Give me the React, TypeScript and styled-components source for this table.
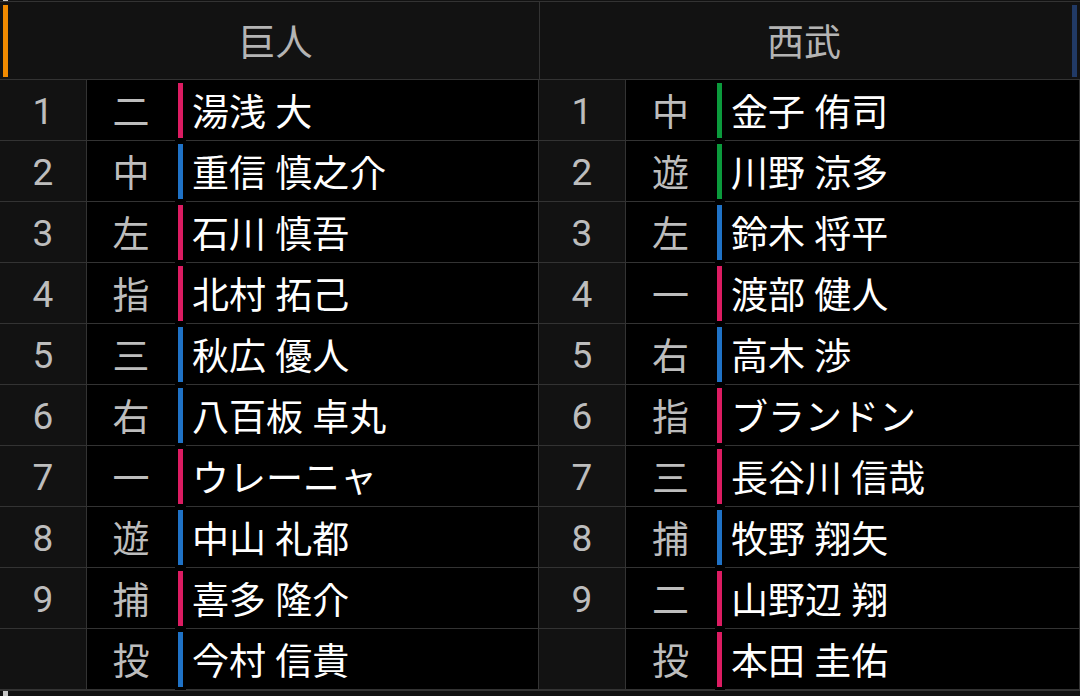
import React from "react";
import styled, { createGlobalStyle } from "styled-components";

const GlobalStyle = createGlobalStyle`
  html, body { margin: 0; padding: 0; background: #000; }
  body { font-family: Roboto, "Noto Sans CJK JP", sans-serif; }
`;

const COLORS = {
  pink: "#dc1c62",
  blue: "#1f72c6",
  green: "#0b9a3c",
};

type Bar = keyof typeof COLORS;
type Player = { num: string; pos: string; name: string; bar: Bar };

const giants: Player[] = [
  { num: "1", pos: "二", name: "湯浅 大", bar: "pink" },
  { num: "2", pos: "中", name: "重信 慎之介", bar: "blue" },
  { num: "3", pos: "左", name: "石川 慎吾", bar: "pink" },
  { num: "4", pos: "指", name: "北村 拓己", bar: "pink" },
  { num: "5", pos: "三", name: "秋広 優人", bar: "blue" },
  { num: "6", pos: "右", name: "八百板 卓丸", bar: "blue" },
  { num: "7", pos: "一", name: "ウレーニャ", bar: "pink" },
  { num: "8", pos: "遊", name: "中山 礼都", bar: "blue" },
  { num: "9", pos: "捕", name: "喜多 隆介", bar: "pink" },
  { num: "", pos: "投", name: "今村 信貴", bar: "blue" },
];

const lions: Player[] = [
  { num: "1", pos: "中", name: "金子 侑司", bar: "green" },
  { num: "2", pos: "遊", name: "川野 涼多", bar: "green" },
  { num: "3", pos: "左", name: "鈴木 将平", bar: "blue" },
  { num: "4", pos: "一", name: "渡部 健人", bar: "pink" },
  { num: "5", pos: "右", name: "高木 渉", bar: "blue" },
  { num: "6", pos: "指", name: "ブランドン", bar: "pink" },
  { num: "7", pos: "三", name: "長谷川 信哉", bar: "pink" },
  { num: "8", pos: "捕", name: "牧野 翔矢", bar: "blue" },
  { num: "9", pos: "二", name: "山野辺 翔", bar: "pink" },
  { num: "", pos: "投", name: "本田 圭佑", bar: "pink" },
];

const Page = styled.div`
  width: 1080px;
  height: 696px;
  overflow: hidden;
  background: #000;
`;

const Strip = styled.div`
  height: 1px;
  background: #121212;
  display: flex;
`;

const StripMark = styled.div`
  width: 5px;
  margin-left: 3px;
  background: #c8c8c8;
`;

const Header = styled.div`
  display: grid;
  grid-template-columns: 539px 1fr;
  height: 77px;
  background: #121212;
  border-top: 1px solid #333;
  border-bottom: 1px solid #333;
`;

const HeaderCell = styled.div<{ $divider?: boolean }>`
  display: flex;
  align-items: stretch;
  border-left: ${(p) => (p.$divider ? "1px solid #333" : "none")};
`;

const TeamBar = styled.div<{ $color: string; $side: "left" | "right" }>`
  width: 5px;
  margin: 3px 0 2px;
  ${(p) => (p.$side === "left" ? "margin-left: 3px;" : "margin-right: 3px;")}
  background: ${(p) => p.$color};
`;

const TeamName = styled.div<{ $side: "left" | "right" }>`
  flex: 1;
  display: flex;
  align-items: center;
  justify-content: center;
  font-size: 37px;
  color: #b4b4b4;
  padding-bottom: 1px;
  ${(p) => (p.$side === "left" ? "padding-left: 4px;" : "padding-right: 4px;")}
`;

const Body = styled.div`
  display: grid;
  grid-template-columns: 538px 542px;
`;

const Table = styled.div<{ $right?: boolean }>`
  display: flex;
  flex-direction: column;
  ${(p) => (p.$right ? "border-left: 1px solid #333; border-right: 1px solid #333;" : "")}
`;

const Row = styled.div<{ $right?: boolean }>`
  display: grid;
  grid-template-columns: ${(p) => (p.$right ? "87px 89px 10px 1fr" : "87px 88px 11px 1fr")};
  height: 61px;
`;

const Num = styled.div`
  background: #121212;
  border-right: 1px solid #333;
  border-bottom: 1px solid #333;
  display: flex;
  align-items: center;
  justify-content: center;
  color: #bdbdbd;
  font-size: 37px;
  padding-top: 3px;
`;

const Pos = styled.div`
  border-bottom: 1px solid #333;
  display: flex;
  align-items: center;
  justify-content: center;
  color: #bdbdbd;
  font-size: 37px;
`;

const BarCell = styled.div<{ $right?: boolean }>`
  padding-top: 3px;
  padding-left: ${(p) => (p.$right ? "2px" : "3px")};
`;

const PlayerBar = styled.div<{ $color: string }>`
  width: 5px;
  height: 55px;
  background: ${(p) => p.$color};
`;

const Name = styled.div`
  border-bottom: 1px solid #333;
  display: flex;
  align-items: center;
  padding-left: 6px;
  color: #fff;
  font-size: 37px;
  white-space: nowrap;
`;

const NextHeader = styled.div`
  height: 6px;
  background: #121212;
  border-top: 1px solid #333;
  display: flex;
`;

const Lineup = ({ players, right }: { players: Player[]; right?: boolean }) => (
  <Table $right={right}>
    {players.map((p, i) => (
      <Row key={i} $right={right}>
        <Num>{p.num}</Num>
        <Pos>{p.pos}</Pos>
        <BarCell $right={right}>
          <PlayerBar $color={COLORS[p.bar]} />
        </BarCell>
        <Name>{p.name}</Name>
      </Row>
    ))}
  </Table>
);

export default function App() {
  return (
    <Page>
      <GlobalStyle />
      <Strip>
        <StripMark />
      </Strip>
      <Header>
        <HeaderCell>
          <TeamBar $color="#f08a00" $side="left" />
          <TeamName $side="left">巨人</TeamName>
        </HeaderCell>
        <HeaderCell $divider>
          <TeamName $side="right">西武</TeamName>
          <TeamBar $color="#213a66" $side="right" />
        </HeaderCell>
      </Header>
      <Body>
        <Lineup players={giants} />
        <Lineup players={lions} right />
      </Body>
      <NextHeader>
        <StripMark />
      </NextHeader>
    </Page>
  );
}
